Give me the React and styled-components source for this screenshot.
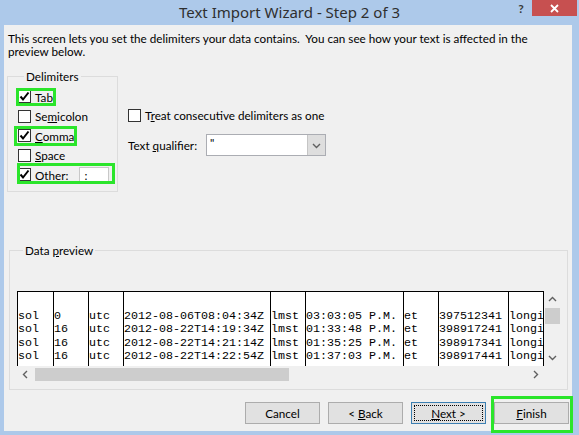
import styled, { createGlobalStyle, css } from "styled-components";

const GREEN = "#2be52b";
const UI_FONT = `"Lato", "Noto Sans", "Liberation Sans", sans-serif`;

const rows = [
	["sol", "0", "utc", "2012-08-06T08:04:34Z", "lmst", "03:03:05 P.M.", "et", "397512341", "longi", ""],
	["sol", "16", "utc", "2012-08-22T14:19:34Z", "lmst", "01:33:48 P.M.", "et", "398917241", "longi", ""],
	["sol", "16", "utc", "2012-08-22T14:21:14Z", "lmst", "01:35:25 P.M.", "et", "398917341", "longi", ""],
	["sol", "16", "utc", "2012-08-22T14:22:54Z", "lmst", "01:37:03 P.M.", "et", "398917441", "longi", ""]
];

const colWidths = [36, 35, 35, 147, 35, 98, 35, 70, 35, 20];

const GlobalStyle = createGlobalStyle`
	html, body {
		margin: 0;
		padding: 0;
	}
	body {
		font-family: ${ UI_FONT };
		font-size: 11.7px;
		color: #000;
	}
`;

const Window = styled.div`
	width: 579px;
	height: 435px;
	background: #adc9ea;
	display: flex;
	flex-direction: column;
	overflow: hidden;
`;

const TitleBar = styled.div`
	height: 25px;
	flex: none;
	display: grid;
	grid-template-columns: 1fr auto 1fr;
	align-items: start;
`;

const Title = styled.div`
	grid-column: 2;
	font-family: "Noto Sans", sans-serif;
	font-size: 15px;
	line-height: 24px;
	color: #2f2f2f;
`;

const Controls = styled.div`
	grid-column: 3;
	display: flex;
	justify-content: flex-end;
	padding-right: 2px;
`;

const HelpButton = styled.span`
	width: 22px;
	height: 16px;
	display: flex;
	align-items: center;
	justify-content: center;
	font-weight: bold;
	font-size: 12px;
	color: #3a3a3a;
`;

const CloseButton = styled.span`
	width: 45px;
	height: 16px;
	background: #c75050;
	display: flex;
	align-items: center;
	justify-content: center;
`;

const Client = styled.div`
	flex: 1;
	margin: 0 7px 4px 4px;
	background: #f0f0f0;
	display: flex;
	flex-direction: column;
`;

const Intro = styled.p`
	margin: 0;
	padding: 6.5px 0 0 4px;
	line-height: 13.5px;
	white-space: nowrap;
`;

const MiddleRow = styled.div`
	display: flex;
	margin-top: 9.5px;
	padding-left: 3px;
`;

const Group = styled.fieldset`
	margin: 0;
	box-sizing: border-box;
	border: 1px solid #dcdcdc;
	width: ${ p => p.$width }px;
	height: ${ p => p.$height }px;
	padding: ${ p => p.$padding };
	min-inline-size: 0;
`;

const Legend = styled.legend`
	margin-left: 6px;
	padding: 0 2px;
	line-height: 16px;
	font-size: 11.7px;
`;

const OptionList = styled.div`
	display: flex;
	flex-direction: column;
`;

const OptionRow = styled.div`
	height: 19.5px;
	display: flex;
	align-items: center;
`;

const Highlight = styled.span`
	position: relative;
	display: inline-flex;
	align-items: center;

	${ p => p.$inset && css`
		&::after {
			content: "";
			position: absolute;
			top: ${ p.$inset[0] }px;
			right: ${ p.$inset[1] }px;
			bottom: ${ p.$inset[2] }px;
			left: ${ p.$inset[3] }px;
			border: 3px solid ${ GREEN };
			pointer-events: none;
		}
	`}
`;

const CheckOption = styled.label`
	display: inline-flex;
	align-items: center;
	height: 16px;
	gap: 4px;
`;

const Box = styled.span`
	width: 13px;
	height: 13px;
	box-sizing: border-box;
	border: 1px solid #333;
	background: #fff;
	display: inline-flex;
	align-items: center;
	justify-content: center;
	flex: none;
`;

const OtherInput = styled.span`
	width: 30px;
	height: 16px;
	box-sizing: border-box;
	margin-left: 11px;
	border: 1px solid #c8c8c8;
	background: #fff;
	padding-left: 4px;
	line-height: 14px;
`;

const OptionsColumn = styled.div`
	display: flex;
	flex-direction: column;
	margin-left: 10px;
	padding-top: 39px;
`;

const QualifierRow = styled.div`
	display: flex;
	align-items: center;
	margin-top: 11px;
	height: 22px;
`;

const FieldLabel = styled.span`
	width: 78px;
`;

const Combo = styled.div`
	width: 120px;
	height: 22px;
	box-sizing: border-box;
	border: 1px solid #abadb3;
	background: #fff;
	display: flex;
`;

const ComboValue = styled.span`
	flex: 1;
	padding-left: 3px;
	line-height: 14px;
`;

const ComboButton = styled.span`
	width: 17px;
	background: #dedede;
	border-left: 1px solid #c5c5c5;
	display: flex;
	align-items: center;
	justify-content: center;
`;

const PreviewGroupWrap = styled.div`
	margin: 50px 0 0 5px;
`;

const PreviewFrame = styled.div`
	display: grid;
	grid-template-columns: 527px 16px;
	grid-template-rows: 75px 17px;
`;

const DataTable = styled.div`
	display: flex;
	background: #fff;
	border-top: 1px solid #000;
	overflow: hidden;
	font-family: "Liberation Mono", monospace;
	font-size: 11.67px;
`;

const DataColumn = styled.div`
	flex: none;
	width: ${ p => p.$width }px;
	box-sizing: border-box;
	border-left: 1px solid #000;
	padding-top: 18px;
	white-space: pre;
	overflow: hidden;
`;

const DataCell = styled.div`
	height: 13.4px;
	line-height: 13.4px;
`;

const ScrollBar = styled.div`
	display: flex;
	flex-direction: ${ p => p.$vertical ? "column" : "row" };
	align-items: center;
	background: #f0f0f0;
`;

const ArrowCell = styled.span`
	flex: none;
	width: 17px;
	height: 17px;
	display: flex;
	align-items: center;
	justify-content: center;
`;

const Thumb = styled.span`
	flex: none;
	background: #cdcdcd;
	${ p => p.$vertical ? css`
		width: 15px;
		height: 16px;
		margin-left: 1px;
	` : css`
		width: 254px;
		height: 13px;
		margin-left: 1px;
	` }
`;

const Spacer = styled.span`
	flex: 1;
`;

const Corner = styled.div`
	background: #f0f0f0;
`;

const ButtonRow = styled.div`
	display: flex;
	justify-content: flex-end;
	gap: 8px;
	margin-top: 12px;
	padding-right: 3px;
`;

const Button = styled.button`
	width: 75px;
	height: 22px;
	box-sizing: border-box;
	padding: 0;
	border: 1px solid ${ p => p.$focused ? "#3c7fb1" : "#acacac" };
	background: #e1e1e1;
	font-family: ${ UI_FONT };
	font-size: 11.7px;
	color: #000;
	position: relative;

	${ p => p.$focused && css`
		&::before {
			content: "";
			position: absolute;
			inset: 2px;
			border: 1px dotted #000;
		}
	`}
`;

const Chevron = ({ dir }) => {
	const rot = { up: 0, right: 90, down: 180, left: 270 }[dir];

	return (
		<svg width="9" height="9" viewBox="0 0 9 9" style={{ transform: `rotate(${ rot }deg)` }}>
			<polyline points="1,6 4.5,2.5 8,6" fill="none" stroke="#606060" strokeWidth="1.4" />
		</svg>
	);
};

const Check = ({ checked }) => (
	<Box>
		{ checked && (
			<svg width="11" height="11" viewBox="0 0 11 11">
				<polyline points="1.5,5.5 4,8.5 9.5,1.5" fill="none" stroke="#000" strokeWidth="2" />
			</svg>
		)}
	</Box>
);

const App = () => {
	return (
		<>
			<GlobalStyle />
			<Window>
				<TitleBar>
					<Title>Text Import Wizard - Step 2 of 3</Title>
					<Controls>
						<HelpButton>?</HelpButton>
						<CloseButton>
							<svg width="9" height="9" viewBox="0 0 9 9">
								<path d="M1 1 L8 8 M8 1 L1 8" stroke="#fff" strokeWidth="1.8" />
							</svg>
						</CloseButton>
					</Controls>
				</TitleBar>

				<Client>
					<Intro>
						This screen lets you set the delimiters your data contains.{ "\u00a0" } You can see how your text is affected in the
						<br />
						preview below.
					</Intro>

					<MiddleRow>
						<Group $width={ 111 } $height={ 124 } $padding="3px 0 0 10px">
							<Legend>Delimiters</Legend>
							<OptionList>
								<OptionRow>
									<Highlight $inset={ [-1, -3, -1, -2] }>
										<CheckOption><Check checked /><span><u>T</u>ab</span></CheckOption>
									</Highlight>
								</OptionRow>
								<OptionRow>
									<CheckOption><Check /><span>Se<u>m</u>icolon</span></CheckOption>
								</OptionRow>
								<OptionRow>
									<Highlight $inset={ [-2, -3, -2, -4] }>
										<CheckOption><Check checked /><span><u>C</u>omma</span></CheckOption>
									</Highlight>
								</OptionRow>
								<OptionRow>
									<CheckOption><Check /><span><u>S</u>pace</span></CheckOption>
								</OptionRow>
								<OptionRow>
									<Highlight $inset={ [-4, -6, -1, -1] }>
										<CheckOption><Check checked /><span><u>O</u>ther:</span></CheckOption>
										<OtherInput>:</OtherInput>
									</Highlight>
								</OptionRow>
							</OptionList>
						</Group>

						<OptionsColumn>
							<CheckOption>
								<Check />
								<span>T<u>r</u>eat consecutive delimiters as one</span>
							</CheckOption>
							<QualifierRow>
								<FieldLabel>Text <u>q</u>ualifier:</FieldLabel>
								<Combo>
									<ComboValue>"</ComboValue>
									<ComboButton><Chevron dir="down" /></ComboButton>
								</Combo>
							</QualifierRow>
						</OptionsColumn>
					</MiddleRow>

					<PreviewGroupWrap>
						<Group $width={ 559 } $height={ 148 } $padding="33px 0 0 7px">
							<Legend>Data <u>p</u>review</Legend>
							<PreviewFrame>
								<DataTable>
									{ colWidths.map((w, c) => (
										<DataColumn $width={ w } key={ c }>
											{ rows.map((row, r) => (
												<DataCell key={ r }>{ row[c] }</DataCell>
											))}
										</DataColumn>
									))}
								</DataTable>

								<ScrollBar $vertical>
									<ArrowCell><Chevron dir="up" /></ArrowCell>
									<Thumb $vertical />
									<Spacer />
									<ArrowCell><Chevron dir="down" /></ArrowCell>
								</ScrollBar>

								<ScrollBar>
									<ArrowCell><Chevron dir="left" /></ArrowCell>
									<Thumb />
									<Spacer />
									<ArrowCell><Chevron dir="right" /></ArrowCell>
								</ScrollBar>

								<Corner />
							</PreviewFrame>
						</Group>
					</PreviewGroupWrap>

					<ButtonRow>
						<Button>Cancel</Button>
						<Button>&lt; <u>B</u>ack</Button>
						<Button $focused><u>N</u>ext &gt;</Button>
						<Highlight $inset={ [-6, -4, -9, -3] }>
							<Button><u>F</u>inish</Button>
						</Highlight>
					</ButtonRow>
				</Client>
			</Window>
		</>
	);
};

export default App;
